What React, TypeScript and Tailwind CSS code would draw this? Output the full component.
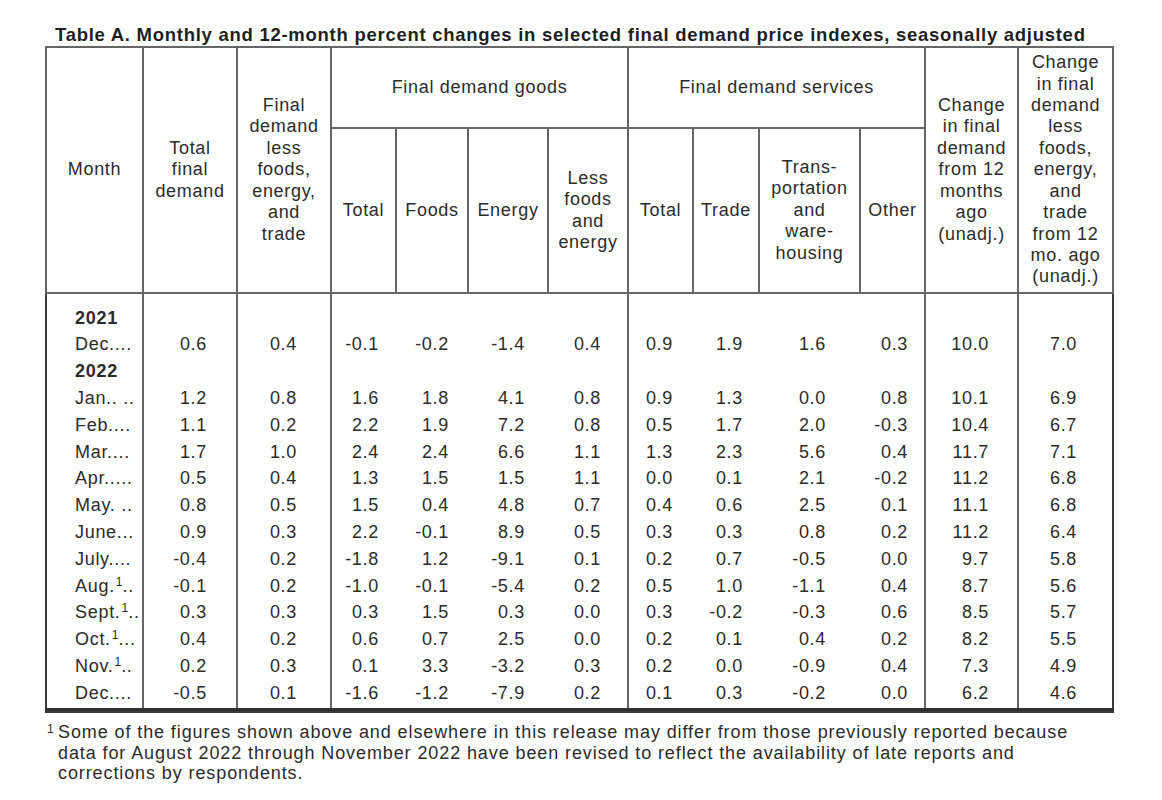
import React from "react";

const colWidths = [97, 94, 94, 65, 72, 80, 80, 65, 66, 101, 65, 93, 95];

// right padding per data column, so the figures line up like the print
const padRight = [
  "",
  "pr-[29px]",
  "pr-[33px]",
  "pr-[17px]",
  "pr-[19px]",
  "pr-[23px]",
  "pr-[26px]",
  "pr-[20px]",
  "pr-[16px]",
  "pr-[34px]",
  "pr-[16px]",
  "pr-[28px]",
  "pr-[35px]",
];

// only these columns carry a rule down through the body
const bodyRule = [false, true, true, true, false, false, false, true, false, false, false, true, true];

type Row =
  | { year: string }
  | { month: string; sup?: boolean; tail: string; values: string[] };

const rows: Row[] = [
  { year: "2021" },
  { month: "Dec.", tail: "...", values: ["0.6", "0.4", "-0.1", "-0.2", "-1.4", "0.4", "0.9", "1.9", "1.6", "0.3", "10.0", "7.0"] },
  { year: "2022" },
  { month: "Jan.", tail: ". ..", values: ["1.2", "0.8", "1.6", "1.8", "4.1", "0.8", "0.9", "1.3", "0.0", "0.8", "10.1", "6.9"] },
  { month: "Feb.", tail: "...", values: ["1.1", "0.2", "2.2", "1.9", "7.2", "0.8", "0.5", "1.7", "2.0", "-0.3", "10.4", "6.7"] },
  { month: "Mar.", tail: "...", values: ["1.7", "1.0", "2.4", "2.4", "6.6", "1.1", "1.3", "2.3", "5.6", "0.4", "11.7", "7.1"] },
  { month: "Apr.", tail: "....", values: ["0.5", "0.4", "1.3", "1.5", "1.5", "1.1", "0.0", "0.1", "2.1", "-0.2", "11.2", "6.8"] },
  { month: "May.", tail: " ..", values: ["0.8", "0.5", "1.5", "0.4", "4.8", "0.7", "0.4", "0.6", "2.5", "0.1", "11.1", "6.8"] },
  { month: "June.", tail: "..", values: ["0.9", "0.3", "2.2", "-0.1", "8.9", "0.5", "0.3", "0.3", "0.8", "0.2", "11.2", "6.4"] },
  { month: "July.", tail: "...", values: ["-0.4", "0.2", "-1.8", "1.2", "-9.1", "0.1", "0.2", "0.7", "-0.5", "0.0", "9.7", "5.8"] },
  { month: "Aug.", sup: true, tail: "..", values: ["-0.1", "0.2", "-1.0", "-0.1", "-5.4", "0.2", "0.5", "1.0", "-1.1", "0.4", "8.7", "5.6"] },
  { month: "Sept.", sup: true, tail: "..", values: ["0.3", "0.3", "0.3", "1.5", "0.3", "0.0", "0.3", "-0.2", "-0.3", "0.6", "8.5", "5.7"] },
  { month: "Oct.", sup: true, tail: "...", values: ["0.4", "0.2", "0.6", "0.7", "2.5", "0.0", "0.2", "0.1", "0.4", "0.2", "8.2", "5.5"] },
  { month: "Nov.", sup: true, tail: "..", values: ["0.2", "0.3", "0.1", "3.3", "-3.2", "0.3", "0.2", "0.0", "-0.9", "0.4", "7.3", "4.9"] },
  { month: "Dec.", tail: "...", values: ["-0.5", "0.1", "-1.6", "-1.2", "-7.9", "0.2", "0.1", "0.3", "-0.2", "0.0", "6.2", "4.6"] },
];

const rule = "border-l-2 border-l-[#666]";
const hcell = "border-2 border-[#666] text-center align-middle font-normal leading-[21.4px] px-0";

function BodyCells({ children }: { children?: (i: number) => React.ReactNode }) {
  return (
    <>
      {colWidths.map((_, i) => (
        <td key={i} className={`${bodyRule[i] ? rule : ""} ${i === 0 ? "pl-[28px] text-left" : `text-right ${padRight[i]}`} whitespace-nowrap overflow-hidden`}>
          {children ? children(i) : null}
        </td>
      ))}
    </>
  );
}

export default function App() {
  return (
    <div
      className="min-h-screen w-[1162px] bg-white text-[#2b2b2b] tracking-[0.7px]"
      style={{ fontFamily: '"Liberation Sans", Arial, Helvetica, sans-serif' }}
    >
      <h1 className="pt-[24px] pl-[55px] text-[18.5px] leading-[22px] font-bold text-[#1f1f1f] tracking-[0.73px] whitespace-nowrap">
        Table A. Monthly and 12-month percent changes in selected final demand price indexes, seasonally adjusted
      </h1>

      <table className="ml-[45px] table-fixed border-collapse border-2 border-[#3a3a3a] text-[18px] w-[1067px]">
        <colgroup>
          {colWidths.map((w, i) => (
            <col key={i} style={{ width: w }} />
          ))}
        </colgroup>
        <thead>
          <tr className="h-[81px]">
            <th rowSpan={2} className={hcell}>Month</th>
            <th rowSpan={2} className={hcell}>Total<br />final<br />demand</th>
            <th rowSpan={2} className={hcell}>Final<br />demand<br />less<br />foods,<br />energy,<br />and<br />trade</th>
            <th colSpan={4} className={hcell}>Final demand goods</th>
            <th colSpan={4} className={hcell}>Final demand services</th>
            <th rowSpan={2} className={hcell}>Change<br />in final<br />demand<br />from 12<br />months<br />ago<br />(unadj.)</th>
            <th rowSpan={2} className={hcell}>Change<br />in final<br />demand<br />less<br />foods,<br />energy,<br />and<br />trade<br />from 12<br />mo. ago<br />(unadj.)</th>
          </tr>
          <tr className="h-[165px]">
            <th className={hcell}>Total</th>
            <th className={hcell}>Foods</th>
            <th className={hcell}>Energy</th>
            <th className={hcell}>Less<br />foods<br />and<br />energy</th>
            <th className={hcell}>Total</th>
            <th className={hcell}>Trade</th>
            <th className={hcell}>Trans-<br />portation<br />and<br />ware-<br />housing</th>
            <th className={hcell}>Other</th>
          </tr>
        </thead>
        <tbody className="leading-[21.4px]">
          <tr className="h-[12px]">
            <BodyCells />
          </tr>
          {rows.map((r, ri) => (
            <tr key={ri} className="h-[26.8px]">
              {"year" in r ? (
                <BodyCells>{(i) => (i === 0 ? <span className="font-bold">{r.year}</span> : null)}</BodyCells>
              ) : (
                <BodyCells>
                  {(i) =>
                    i === 0 ? (
                      <span>
                        {r.month}
                        {r.sup && (
                          <span className="relative -top-[6px] text-[12px] leading-none tracking-normal pl-[1px]">1</span>
                        )}
                        {r.tail}
                      </span>
                    ) : (
                      r.values[i - 1]
                    )
                  }
                </BodyCells>
              )}
            </tr>
          ))}
          <tr className="h-[3px]">
            <BodyCells />
          </tr>
        </tbody>
        <tfoot>
          <tr>
            <td colSpan={13} className="border-t-[3px] border-t-[#2f2f2f] p-0" />
          </tr>
        </tfoot>
      </table>

      <div className="flex pl-[47px] pt-[9px] text-[18px] leading-[20.5px] tracking-[0.9px]">
        <span className="w-[11px] text-[12px] leading-[12px] tracking-normal pt-[1px]">1</span>
        <p className="whitespace-nowrap">
          Some of the figures shown above and elsewhere in this release may differ from those previously reported because
          <br />
          data for August 2022 through November 2022 have been revised to reflect the availability of late reports and
          <br />
          corrections by respondents.
        </p>
      </div>
    </div>
  );
}
